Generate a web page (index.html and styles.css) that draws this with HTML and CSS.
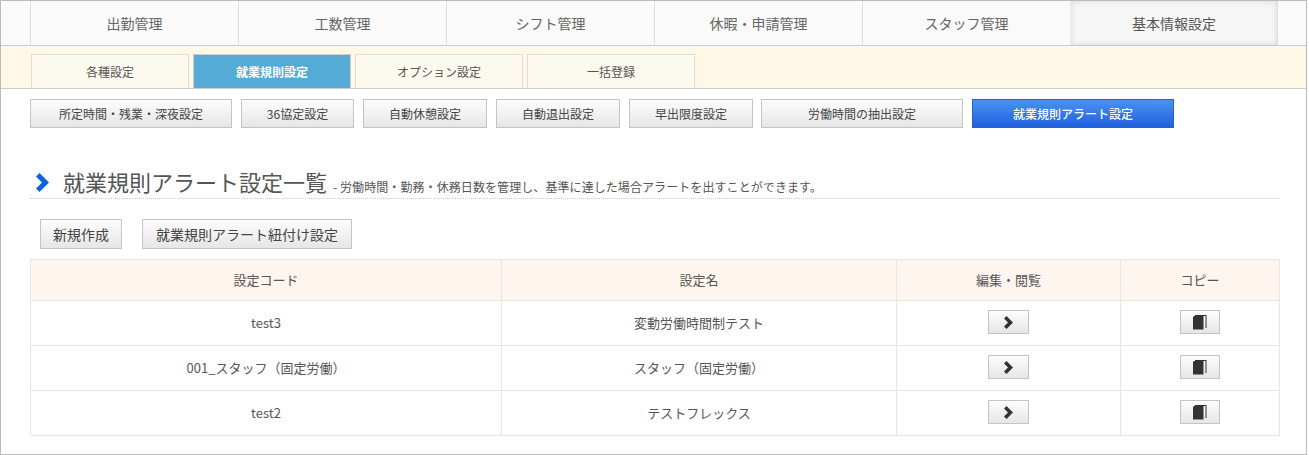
FILE: index.html
```html
<!DOCTYPE html>
<html lang="ja">
<head>
<meta charset="utf-8">
<title>就業規則アラート設定一覧</title>
<link rel="stylesheet" href="styles.css">
</head>
<body>
<div class="frame">
  <nav class="main-nav">
    <a class="main-item">出勤管理</a>
    <a class="main-item">工数管理</a>
    <a class="main-item">シフト管理</a>
    <a class="main-item">休暇・申請管理</a>
    <a class="main-item">スタッフ管理</a>
    <a class="main-item is-current">基本情報設定</a>
  </nav>
  <nav class="sub-nav">
    <a class="sub-tab w158">各種設定</a>
    <a class="sub-tab w158 is-current">就業規則設定</a>
    <a class="sub-tab w168">オプション設定</a>
    <a class="sub-tab w168">一括登録</a>
  </nav>
  <div class="rule-nav">
    <a class="rule-btn w202">所定時間・残業・深夜設定</a>
    <a class="rule-btn w113">36協定設定</a>
    <a class="rule-btn w124">自動休憩設定</a>
    <a class="rule-btn w124">自動退出設定</a>
    <a class="rule-btn w124">早出限度設定</a>
    <a class="rule-btn w202 tight">労働時間の抽出設定</a>
    <a class="rule-btn w202 is-current">就業規則アラート設定</a>
  </div>
  <header class="heading">
    <svg class="heading-icon" viewBox="0 0 13 19" aria-hidden="true"><path d="M0 3.5 3.5 0 13 9.5 3.5 19 0 15.5 6 9.5Z"/></svg>
    <h1>就業規則アラート設定一覧</h1>
    <p>- 労働時間・勤務・休務日数を管理し、基準に達した場合アラートを出すことができます。</p>
  </header>
  <div class="actions">
    <a class="action-btn">新規作成</a>
    <a class="action-btn">就業規則アラート紐付け設定</a>
  </div>
  <table class="list">
    <colgroup><col class="c1"><col class="c2"><col class="c3"><col class="c4"></colgroup>
    <thead>
      <tr><th>設定コード</th><th>設定名</th><th>編集・閲覧</th><th>コピー</th></tr>
    </thead>
    <tbody>
      <tr>
        <td>test3</td><td>変動労働時間制テスト</td>
        <td><a class="icon-btn edit"><svg viewBox="0 0 10 13" aria-hidden="true"><path d="M0 2.5 2.5 0 9 6.5 2.5 13 0 10.5 4 6.5Z"/></svg></a></td>
        <td><a class="icon-btn copy"><svg viewBox="0 0 14 15" aria-hidden="true"><path class="bk" d="M0 2 1 1H10.5V14.5H0Z"/><path class="pg" d="M2 0H13.5V13H12.5V1H2Z"/></svg></a></td>
      </tr>
      <tr>
        <td>001_スタッフ（固定労働）</td><td>スタッフ（固定労働）</td>
        <td><a class="icon-btn edit"><svg viewBox="0 0 10 13" aria-hidden="true"><path d="M0 2.5 2.5 0 9 6.5 2.5 13 0 10.5 4 6.5Z"/></svg></a></td>
        <td><a class="icon-btn copy"><svg viewBox="0 0 14 15" aria-hidden="true"><path class="bk" d="M0 2 1 1H10.5V14.5H0Z"/><path class="pg" d="M2 0H13.5V13H12.5V1H2Z"/></svg></a></td>
      </tr>
      <tr>
        <td>test2</td><td>テストフレックス</td>
        <td><a class="icon-btn edit"><svg viewBox="0 0 10 13" aria-hidden="true"><path d="M0 2.5 2.5 0 9 6.5 2.5 13 0 10.5 4 6.5Z"/></svg></a></td>
        <td><a class="icon-btn copy"><svg viewBox="0 0 14 15" aria-hidden="true"><path class="bk" d="M0 2 1 1H10.5V14.5H0Z"/><path class="pg" d="M2 0H13.5V13H12.5V1H2Z"/></svg></a></td>
      </tr>
    </tbody>
  </table>
</div>
</body>
</html>
```
FILE: styles.css
```css
* { box-sizing: border-box; }
html, body { margin: 0; padding: 0; background: #fff; }
body { font-family: "Noto Sans CJK JP", "Noto Sans", sans-serif; color: #555; }
a { display: flex; align-items: center; justify-content: center; }
.frame { width: 1307px; height: 455px; border: 1px solid #bbb; }

.main-nav { display: flex; height: 45px; padding-left: 29px; background: #fafafa; border-bottom: 1px solid #ccc; }
.main-item { width: 208px; font-size: 14px; color: #666; border-left: 1px solid #ddd; }
.main-item.is-current { color: #555; background: #f6f6f6; border-left-color: #eee; box-shadow: inset 0 0 6px rgba(0,0,0,.12); border-right: 1px solid #ddd; }

.sub-nav { display: flex; gap: 4px; height: 43px; padding: 8px 0 0 30px; background: #fff8e6; border-bottom: 1px solid #ccc; }
.sub-tab { height: 34px; font-size: 12px; color: #555; background: #fcf9ef; border: 1px solid #ddd; border-bottom: 0; }
.sub-tab.is-current { color: #fff; font-weight: 700; background: #53abd6; border-color: #ccc; }
.w158 { width: 158px; }
.w168 { width: 168px; }

.rule-nav { display: flex; gap: 9px; padding: 10px 0 0 29px; }
.rule-btn { height: 29px; font-size: 12px; color: #444; background: linear-gradient(#fdfdfd, #e6e6e6); border: 1px solid #c4c4c4; }
.rule-btn.tight { margin-left: -1px; }
.rule-btn.is-current { color: #fff; font-weight: 500; background: linear-gradient(#4a93f0, #1f5fe0); border-color: #2a63c8; }
.w202 { width: 202px; }
.w113 { width: 113px; }
.w124 { width: 124px; }

.heading { display: flex; align-items: flex-start; margin: 39px 26px 0 29px; height: 32px; padding-left: 6px; border-bottom: 1px dotted #ccc; }
.heading-icon { width: 13px; height: 19px; fill: #0b62e8; margin: 6px 14px 0 0; flex: none; }
.heading h1 { margin: 0; font-size: 22px; line-height: 28px; font-weight: 400; color: #555; }
.heading p { margin: 11px 0 0 6px; font-size: 12px; color: #555; letter-spacing: .08px; }

.actions { display: flex; gap: 20px; padding: 20px 0 0 39px; }
.action-btn { height: 30px; font-size: 14px; color: #444; background: linear-gradient(#fdfdfd, #e6e6e6); border: 1px solid #c4c4c4; }
.actions .action-btn:first-child { width: 82px; }
.actions .action-btn:last-child { width: 210px; }

.list { width: 1249px; margin: 10px 0 0 29px; border-collapse: collapse; table-layout: fixed; font-size: 13px; }
.c1 { width: 471px; }
.c2 { width: 395px; }
.c3 { width: 224px; }
.c4 { width: 159px; }
.list th, .list td { border: 1px solid #e6e6e6; text-align: center; padding: 0 0 2px; }
.list th { height: 41px; font-weight: 400; color: #555; background: #fff5ef; }
.list td { height: 45px; color: #555; }

.icon-btn { height: 24px; margin: 0 auto; background: linear-gradient(#fdfdfd, #e6e6e6); border: 1px solid #c4c4c4; }
.icon-btn.edit { width: 41px; }
.icon-btn.copy { width: 40px; }
.edit svg { width: 10px; height: 13px; fill: #333; }
.copy svg { width: 14px; height: 15px; fill: #333; }
```
